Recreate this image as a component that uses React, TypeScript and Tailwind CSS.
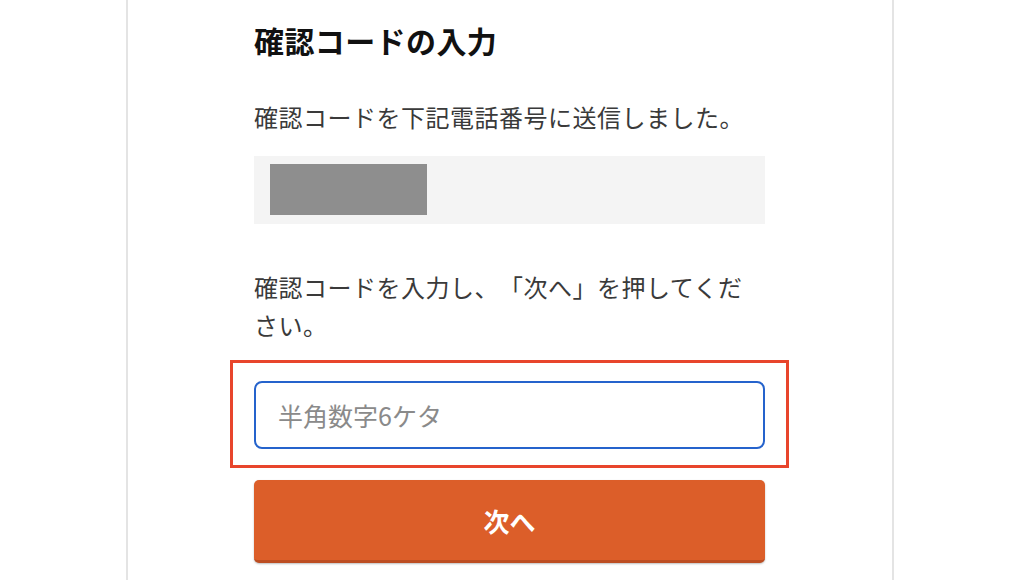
export default function App() {
  return (
    <div className="min-h-[580px] bg-white font-['Noto_Sans_CJK_JP','Noto_Sans',sans-serif] [text-spacing-trim:space-all]">
      <div className="ml-[126px] w-[768px] min-h-[580px] border-x-2 border-[#e4e4e4] pl-[126px] pr-[127px] pt-[18px]">
        <h1 className="text-[30px] leading-[44px] tracking-[0.4px] font-bold text-[#111]">
          確認コードの入力
        </h1>

        <p className="mt-[36px] text-[24px] leading-[38px] tracking-[0.5px] text-[#3a3a3a]">
          確認コードを下記電話番号に送信しました。
        </p>

        {/* 電話番号は伏せ字 */}
        <div className="mt-[20px] h-[68px] bg-[#f4f4f4] pl-[16px] pt-[8px]">
          <div className="h-[51px] w-[157px] bg-[#8e8e8e]" />
        </div>

        <p className="mt-[44px] text-[24px] leading-[38px] tracking-[0.5px] text-[#3a3a3a]">
          確認コードを入力し、「次へ」を押してください。
        </p>

        <div className="-mx-6 mt-[16px] border-[3px] border-[#e8452c] px-[21px] pt-[18px] pb-[16px]">
          <input
            type="text"
            inputMode="numeric"
            placeholder="半角数字6ケタ"
            className="block h-[68px] w-full rounded-[8px] border-2 border-[#2563cc] bg-white px-[22px] text-[25px] text-[#333] outline-none placeholder:text-[#8a8a8a]"
          />
        </div>

        <button
          type="button"
          className="mt-[12px] block h-[83px] w-full rounded-[5px] border-b-[3px] border-[#bd4e22] bg-[#dc5e29] text-[26px] font-bold text-white shadow-[0_1px_2px_rgba(0,0,0,0.25)]"
        >
          次へ
        </button>
      </div>
    </div>
  );
}
